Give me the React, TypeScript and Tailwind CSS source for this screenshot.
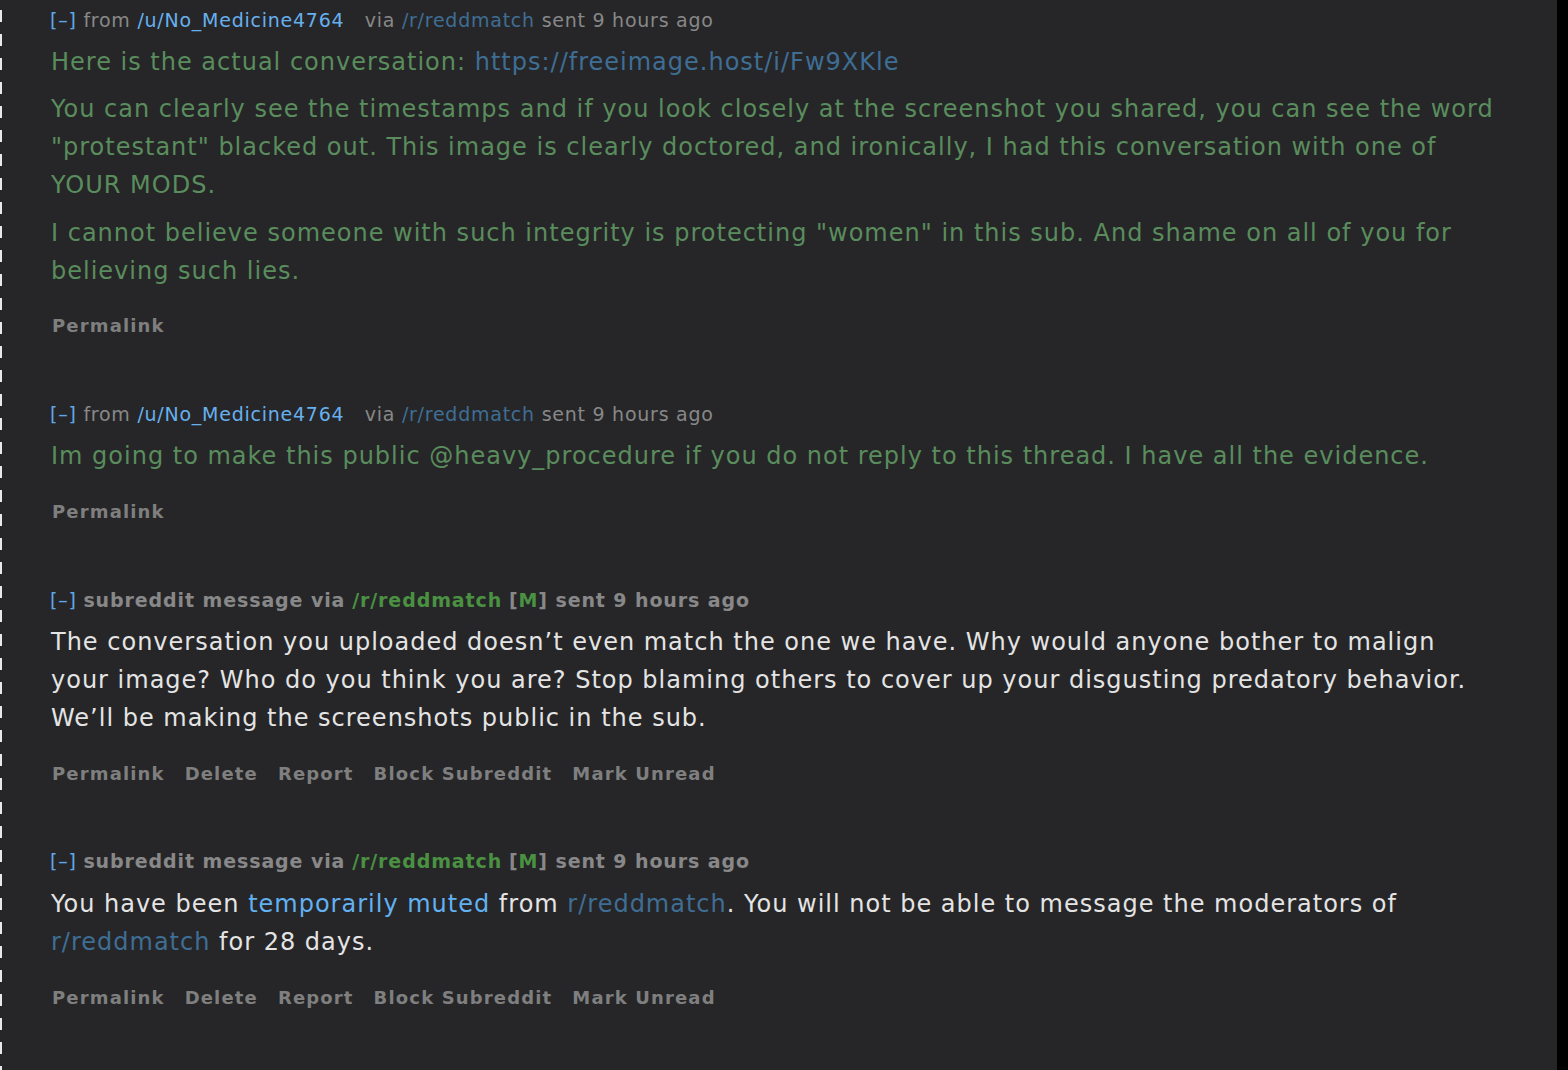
import React from "react";

const font = { fontFamily: '"DejaVu Sans", Verdana, sans-serif' };

function Meta({ children }: { children: React.ReactNode }) {
  return <div className="h-[24px] whitespace-nowrap text-[19px] leading-[24px] tracking-[0.75px]">{children}</div>;
}

function Actions({ items, mt }: { items: string[]; mt: string }) {
  return (
    <div className={`${mt} ml-[2px] flex h-[24px] items-center gap-[20px] text-[18px] font-bold leading-[24px] tracking-[1.15px] text-[#7f7f7f]`}>
      {items.map((t) => (
        <span key={t}>{t}</span>
      ))}
    </div>
  );
}

function Body({ children, color, mt }: { children: React.ReactNode; color: string; mt: string }) {
  return <div className={`${mt} pl-[1px] text-[24px] leading-[38px] tracking-[1px] ${color}`}>{children}</div>;
}

function UserMeta() {
  return (
    <Meta>
      <span className="text-[#5fa8e8]">[–]</span>{" "}
      <span className="text-[#888888]">from</span>{" "}
      <span className="text-[#66b0ee]">/u/No_Medicine4764</span>
      <span className="text-[#888888]">&nbsp;&nbsp; via</span>{" "}
      <span className="text-[#3f6e95]">/r/reddmatch</span>{" "}
      <span className="text-[#888888]">sent 9 hours ago</span>
    </Meta>
  );
}

function SubMeta() {
  return (
    <Meta>
      <span className="text-[#5fa8e8]">[–]</span>{" "}
      <span className="font-bold tracking-[0.9px] text-[#888888]">subreddit message via</span>{" "}
      <span className="font-bold tracking-[0.9px] text-[#4a9142]">/r/reddmatch</span>{" "}
      <span className="font-bold tracking-[0.9px] text-[#888888]">
        [<span className="text-[#4a9142]">M</span>] sent 9 hours ago
      </span>
    </Meta>
  );
}

export default function App() {
  const all = ["Permalink", "Delete", "Report", "Block Subreddit", "Mark Unread"];
  return (
    <div className="flex min-h-[1070px] w-full bg-[#262628]" style={font}>
      <div className="w-[2px] shrink-0 bg-[repeating-linear-gradient(to_bottom,transparent_0px,transparent_10px,#e8e8e8_10px,#e8e8e8_22px,transparent_22px,transparent_24px)]" />
      <div className="flex-1 pl-[48px] pt-[8px]">
        {/* Message 1 */}
        <div className="mb-[64px]">
          <UserMeta />
          <Body color="text-[#5a8d5d]" mt="mt-[11px]">
            <p>
              Here is the actual conversation: <span className="text-[#3f6e95]">https://freeimage.host/i/Fw9XKle</span>
            </p>
            <p className="mt-[9px]">
              You can clearly see the timestamps and if you look closely at the screenshot you shared, you can see the word
              <br />
              "protestant" blacked out. This image is clearly doctored, and ironically, I had this conversation with one of
              <br />
              YOUR MODS.
            </p>
            <p className="mt-[10px]">
              I cannot believe someone with such integrity is protecting "women" in this sub. And shame on all of you for
              <br />
              believing such lies.
            </p>
          </Body>
          <Actions items={["Permalink"]} mt="mt-[24px]" />
        </div>

        {/* Message 2 */}
        <div className="mb-[64px]">
          <UserMeta />
          <Body color="text-[#5a8d5d]" mt="mt-[11px]">
            <p>
              Im going to make this public @heavy_procedure if you do not reply to this thread. I have all the evidence.
            </p>
          </Body>
          <Actions items={["Permalink"]} mt="mt-[25px]" />
        </div>

        {/* Message 3 */}
        <div className="mb-[63px]">
          <SubMeta />
          <Body color="text-[#e4e4e4]" mt="mt-[11px]">
            <p>
              The conversation you uploaded doesn’t even match the one we have. Why would anyone bother to malign
              <br />
              your image? Who do you think you are? Stop blaming others to cover up your disgusting predatory behavior.
              <br />
              We’ll be making the screenshots public in the sub.
            </p>
          </Body>
          <Actions items={all} mt="mt-[25px]" />
        </div>

        {/* Message 4 */}
        <div className="mb-[40px]">
          <SubMeta />
          <Body color="text-[#e4e4e4]" mt="mt-[12px]">
            <p>
              You have been <span className="text-[#62b1f2]">temporarily muted</span> from{" "}
              <span className="text-[#3f6e95]">r/reddmatch</span>. You will not be able to message the moderators of
              <br />
              <span className="text-[#3f6e95]">r/reddmatch</span> for 28 days.
            </p>
          </Body>
          <Actions items={all} mt="mt-[25px]" />
        </div>
      </div>
      <div className="w-[11px] shrink-0 bg-black" />
    </div>
  );
}
